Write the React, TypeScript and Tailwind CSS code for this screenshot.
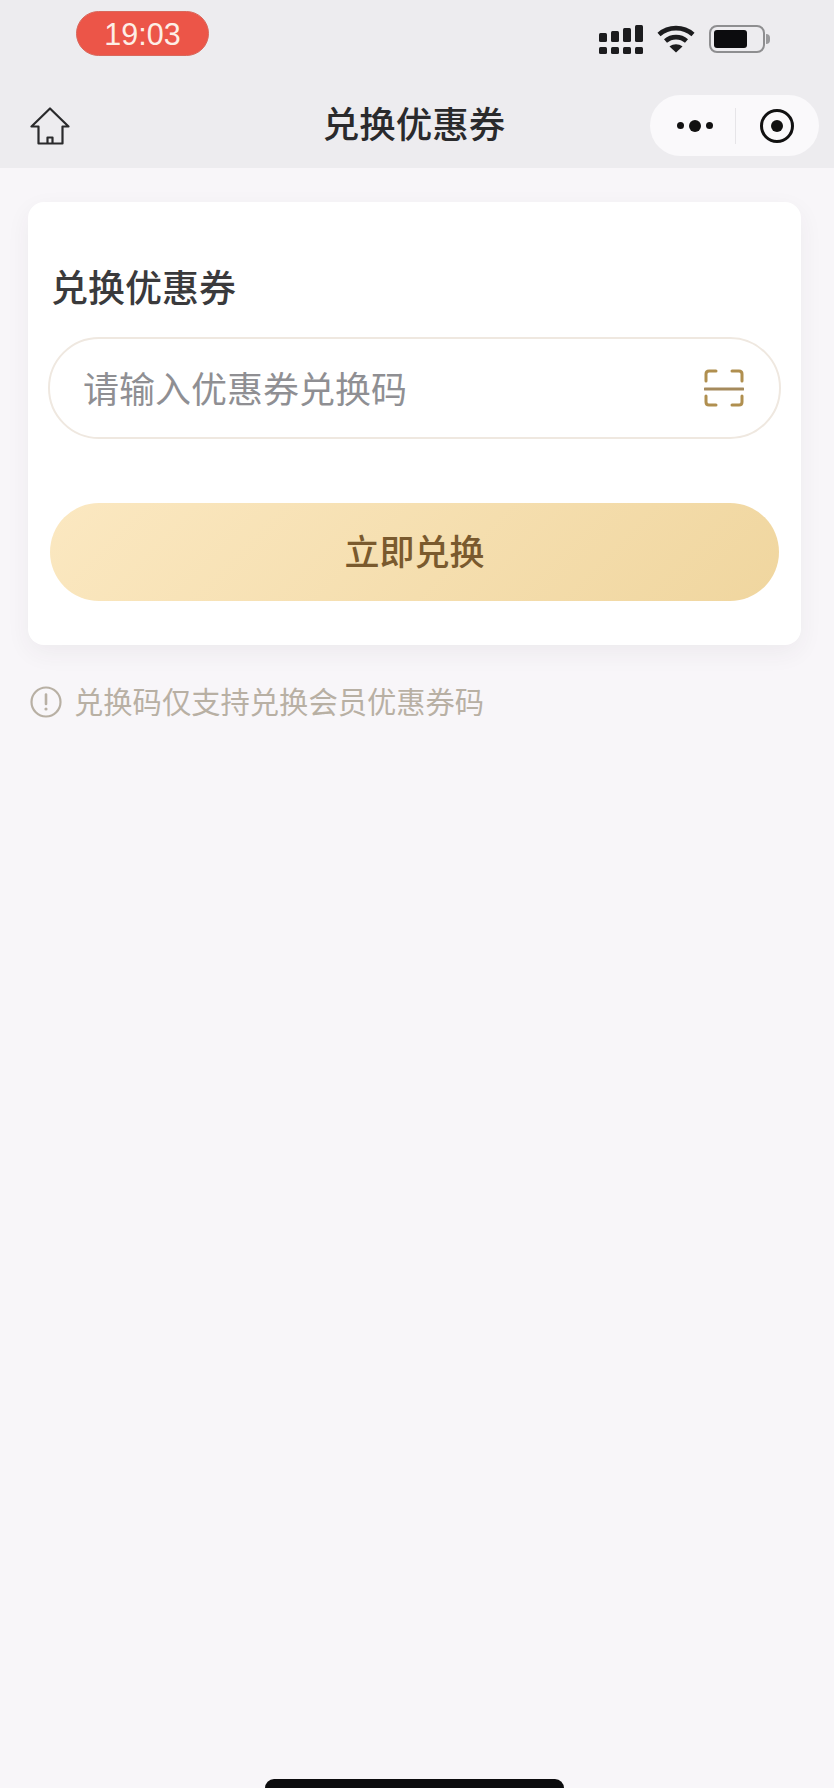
const cjk = "font-['Noto_Sans_CJK_SC',sans-serif]";

function SignalIcon() {
  return (
    <svg width="44" height="30" viewBox="0 0 44 30" fill="#1c1c1e">
      <rect x="0" y="8" width="8" height="9" rx="1.5" />
      <rect x="0" y="22" width="8" height="7" rx="1.5" />
      <rect x="12" y="6" width="8" height="11" rx="1.5" />
      <rect x="12" y="22" width="8" height="7" rx="1.5" />
      <rect x="24" y="3" width="8" height="14" rx="1.5" />
      <rect x="24" y="22" width="8" height="7" rx="1.5" />
      <rect x="36" y="0" width="8" height="17" rx="1.5" />
      <rect x="36" y="22" width="8" height="7" rx="1.5" />
    </svg>
  );
}

function WifiIcon() {
  return (
    <svg width="38" height="28" viewBox="0 0 38 28" fill="none" stroke="#1c1c1e" strokeWidth="4.6">
      <path d="M2 9.5C11.5 1 26.5 1 36 9.5" />
      <path d="M8.5 16C14.5 10.8 23.5 10.8 29.5 16" />
      <path d="M19 27.5L12.5 21.5C16.5 18.6 21.5 18.6 25.5 21.5Z" fill="#1c1c1e" stroke="none" />
    </svg>
  );
}

function BatteryIcon() {
  return (
    <div className="flex items-center">
      <div className="w-[56px] h-[28px] rounded-[8px] border-2 border-[#8e8e90] p-[3px]">
        <div className="w-[33px] h-full rounded-[3px] bg-[#0c0c0e]" />
      </div>
      <div className="ml-[1px] w-[4px] h-[10px] rounded-r-full bg-[#9a9a9c]" />
    </div>
  );
}

function HomeIcon() {
  return (
    <svg width="40" height="38" viewBox="0 0 40 38" fill="none" stroke="#2a2a2c" strokeWidth="2.2" strokeLinejoin="round">
      <path d="M20 1.5L1.5 19.5H8.5V36.5H32.5V19.5H38.5Z" />
      <path d="M17.5 36.5V30.5H22.5V36.5" />
    </svg>
  );
}

function ScanIcon() {
  return (
    <svg width="40" height="38" viewBox="0 0 40 38" fill="none" stroke="#b08f4f" strokeWidth="3" strokeLinecap="round">
      <path d="M12 2H5C3 2 2 3 2 5V12" />
      <path d="M28 2H35C37 2 38 3 38 5V12" />
      <path d="M2 27V33C2 35 3 36 5 36H12" />
      <path d="M38 27V33C38 35 37 36 35 36H28" />
      <path d="M1 20H39" stroke="#a58a5c" />
    </svg>
  );
}

function InfoIcon() {
  return (
    <svg width="32" height="32" viewBox="0 0 32 32" fill="none" stroke="#b8b0a4" strokeWidth="2.2">
      <circle cx="16" cy="16" r="14.5" />
      <path d="M16 8.5V18" strokeLinecap="round" strokeWidth="2.6" />
      <circle cx="16" cy="23" r="1.6" fill="#b8b0a4" stroke="none" />
    </svg>
  );
}

export default function App() {
  return (
    <div className={`w-[834px] h-[1788px] bg-[#f8f6f9] flex flex-col ${cjk}`}>
      <div className="h-[168px] bg-[#edecef] flex flex-col">
        {/* status bar */}
        <div className="h-[93px] flex items-start pl-[76px] pr-[64px]">
          <div className="mt-[11px] pt-[2px] w-[133px] h-[45px] rounded-full bg-[#ec5548] border border-[#d9685c] flex items-center justify-center text-[#fdeee6] text-[30.5px] font-['Liberation_Sans',sans-serif]">
            19:03
          </div>
          <div className="ml-auto mt-[25px] flex items-start gap-[14px]">
            <SignalIcon />
            <WifiIcon />
            <BatteryIcon />
          </div>
        </div>
        {/* nav */}
        <div className="relative h-[63px] flex items-center justify-between pl-[30px] pr-[15px] mt-[1px]">
          <HomeIcon />
          <div className="absolute left-0 right-0 pr-[6px] pb-[6px] text-center text-[#2a2a2c] text-[36.5px] leading-[44px] font-medium">
            兑换优惠券
          </div>
          <div className="relative w-[169px] h-[61px] rounded-full bg-[#faf9fb] flex items-center">
            <div className="w-[85px] flex items-center justify-center gap-[5px] pl-[4px]">
              <span className="w-[7px] h-[7px] rounded-full bg-[#111]" />
              <span className="w-[12px] h-[12px] rounded-full bg-[#111]" />
              <span className="w-[7px] h-[7px] rounded-full bg-[#111]" />
            </div>
            <div className="w-px h-[36px] bg-[#e6e5e8]" />
            <div className="flex-1 flex items-center justify-center pr-[1px]">
              <div className="w-[34px] h-[34px] rounded-full border-[3px] border-[#111] flex items-center justify-center">
                <span className="w-[12px] h-[12px] rounded-full bg-[#111]" />
              </div>
            </div>
          </div>
        </div>
      </div>

      <div className="flex-1 flex flex-col pl-[28px] pr-[33px] pt-[34px]">
        <div className="bg-white rounded-[16px] shadow-[0_8px_24px_rgba(60,50,70,0.06)] px-[20px] pt-[62px] pb-[44px]">
          <div className="pl-[3px] text-[37px] leading-[44px] text-[#3a3a3c] font-medium">兑换优惠券</div>
          <div className="mt-[29px] h-[102px] rounded-full border-2 border-[#efe8e0] flex items-center justify-between pl-[33px] pr-[35px]">
            <span className="pb-[2px] text-[36px] text-[#8f8f93]">请输入优惠券兑换码</span>
            <ScanIcon />
          </div>
          <button
            type="button"
            className="mt-[64px] mx-[2px] pb-[4px] w-[729px] h-[98px] rounded-full bg-[linear-gradient(135deg,#fbe8c1_0%,#f0d69f_100%)] text-[#7a5a2e] text-[35px] font-medium"
          >
            立即兑换
          </button>
        </div>
        <div className="mt-[41px] pl-[2px] flex items-center gap-[12px]">
          <InfoIcon />
          <span className="pb-[4px] text-[29.3px] leading-[28px] text-[#b8b0a4]">兑换码仅支持兑换会员优惠券码</span>
        </div>
      </div>

      <div className="h-[9px] flex justify-center pr-[5px]">
        <div className="w-[299px] h-full rounded-t-full bg-[#0c0c0e]" />
      </div>
    </div>
  );
}
